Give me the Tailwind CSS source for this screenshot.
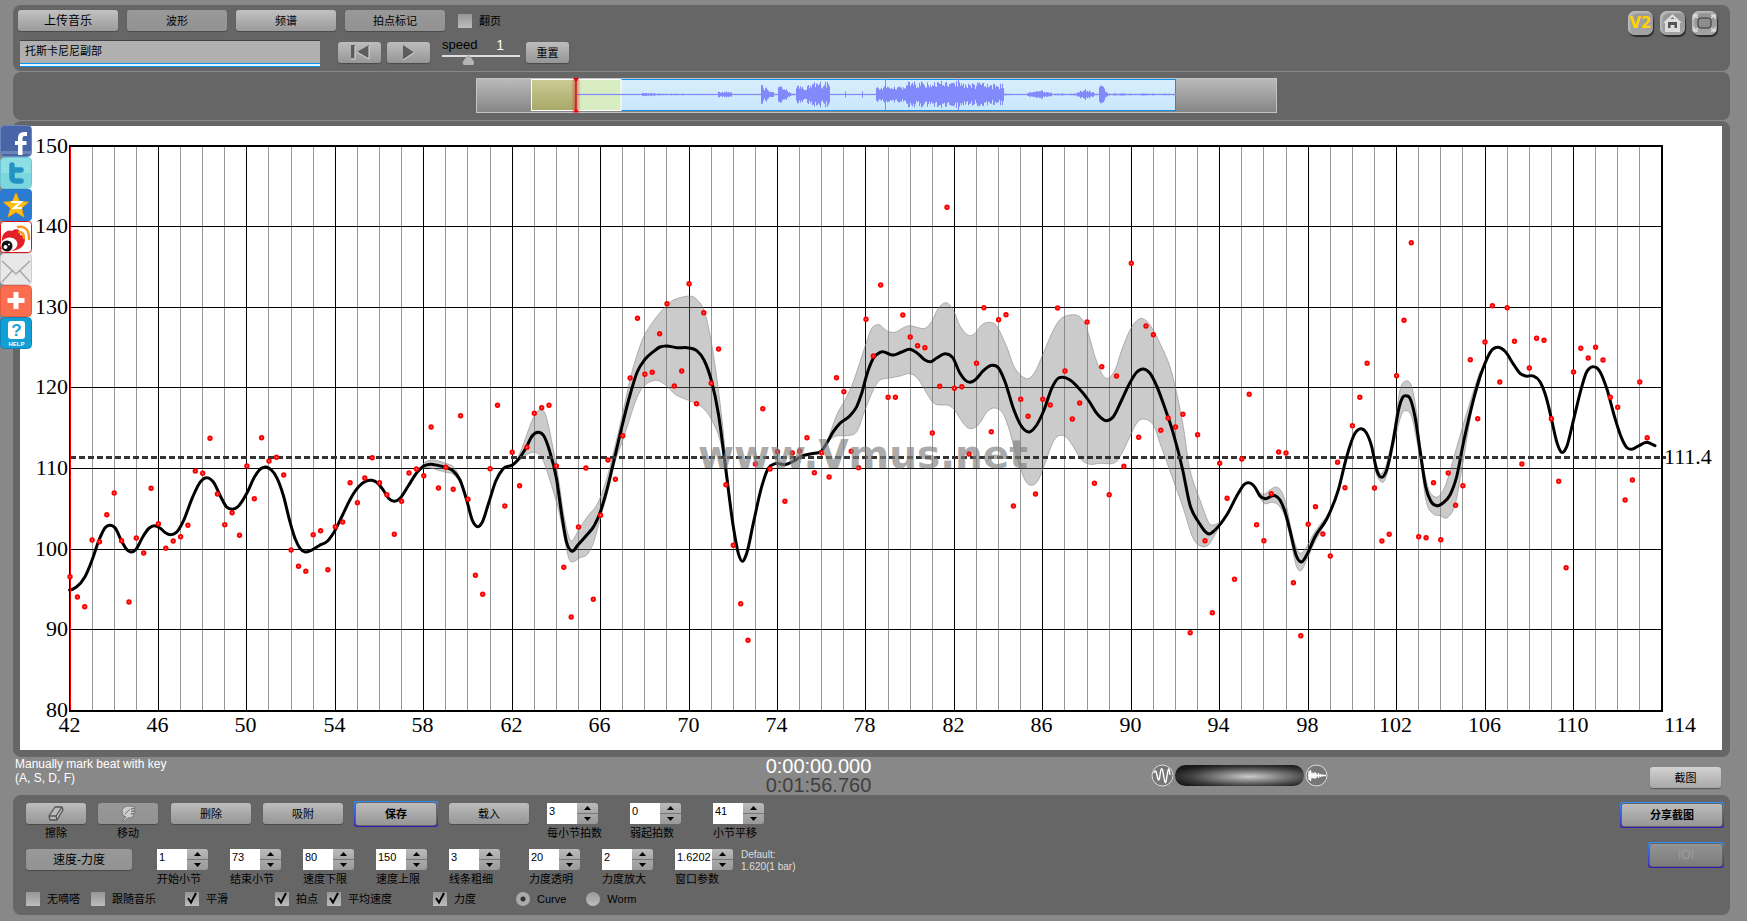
<!DOCTYPE html>
<html lang="zh-CN">
<head>
<meta charset="utf-8">
<meta name="viewport" content="width=device-width, initial-scale=1">
<title>Vmus.net</title>
<script src="https://cdn.jsdelivr.net/npm/@tailwindcss/browser@4"></script>
</head>
<body class="min-h-screen bg-[#888888] font-['Liberation_Sans','Noto_Sans_CJK_SC',sans-serif] text-[11px] leading-[14px] text-black">
<main class="flex flex-col gap-px pt-[5px] pr-[17px] pl-[13px]">

  <header class="flex h-[66px] justify-between rounded-lg bg-[#666666] pt-[5px] pr-[13px] pl-[5px]">
    <div class="flex flex-col">
      <div class="flex items-center gap-[9px]">
        <button class="h-[21px] w-[100px] rounded-[3px] bg-linear-to-b from-[#c2c2c2] to-[#9b9b9b] text-xs shadow-[0_1px_1px_#4a4a4a]">上传音乐</button>
        <button class="h-[21px] w-[100px] rounded-[3px] bg-linear-to-b from-[#999999] to-[#929292] text-[11px] shadow-[0_1px_1px_#4a4a4a]">波形</button>
        <button class="h-[21px] w-[100px] rounded-[3px] bg-linear-to-b from-[#c2c2c2] to-[#9b9b9b] text-[11px] shadow-[0_1px_1px_#4a4a4a]">频谱</button>
        <button class="h-[21px] w-[100px] rounded-[3px] bg-linear-to-b from-[#999999] to-[#929292] text-[11px] shadow-[0_1px_1px_#4a4a4a]">拍点标记</button>
        <label class="ml-1 flex items-center gap-[7px]"><input type="checkbox" class="size-[14px] appearance-none bg-linear-to-b from-[#969696] to-[#bdbdbd]">翻页</label>
      </div>
      <div class="flex pt-[9px] pl-[2px]">
        <input type="text" aria-label="曲名" value="托斯卡尼尼副部" class="h-[27px] w-[300px] border-t border-[#444444] bg-[#b0b0b0] px-[5px] pb-2 text-[11px] shadow-[inset_0_-1px_#0a92f0,inset_0_-3px_#e6f3ff,inset_0_-4px_#0a92f0] outline-none">
        <button aria-label="回到开头" class="mt-[2px] ml-[18px] grid h-[21px] w-[43px] place-items-center rounded-[3px] bg-linear-to-b from-[#bdbdbd] to-[#969696] shadow-[0_1px_1px_#4a4a4a]">
          <svg width="22" height="17" viewBox="0 0 22 17"><path d="M2 1h4v14H2zM20 1v14L8 8z" fill="#5c5c5c"/><path d="M6 2v13H2M20 2v13L8 8" fill="none" stroke="#ddd" stroke-width="1"/></svg>
        </button>
        <button aria-label="播放" class="mt-[2px] ml-[6px] grid h-[21px] w-[43px] place-items-center rounded-[3px] bg-linear-to-b from-[#bdbdbd] to-[#969696] shadow-[0_1px_1px_#4a4a4a]">
          <svg width="16" height="17" viewBox="0 0 16 17"><path d="M2 1v15l11-7.500z" fill="#5c5c5c"/><path d="M2 16l11-7.500" stroke="#ddd"/></svg>
        </button>
        <div class="-mt-[2px] ml-3 flex w-[78px] flex-col gap-[2px]">
          <div class="flex items-end justify-between pr-4 text-[13px] leading-[14px]"><label for="speed">speed</label><output for="speed" class="text-sm leading-[14px] text-white">1</output></div>
          <input id="speed" type="range" min="0" max="100" value="31" class="h-[11px] w-full appearance-none bg-[linear-gradient(#ddd,#ddd)] bg-[length:100%_2px] bg-[position:0_1px] bg-no-repeat [&::-webkit-slider-thumb]:h-[11px] [&::-webkit-slider-thumb]:w-3 [&::-webkit-slider-thumb]:appearance-none [&::-webkit-slider-thumb]:bg-[#b4b4b4] [&::-webkit-slider-thumb]:[clip-path:polygon(50%_0,100%_75%,90%_100%,10%_100%,0_75%)]">
        </div>
        <button class="mt-[2px] ml-[6px] h-[21px] w-[43px] rounded-[3px] bg-linear-to-b from-[#bdbdbd] to-[#969696] text-[11px] shadow-[0_1px_1px_#4a4a4a]">重置</button>
      </div>
    </div>
    <nav class="flex gap-[7px] pt-px">
      <a href="#v2" class="grid h-6 w-[25px] place-items-center rounded-[7px] bg-linear-to-b from-[#999999] to-[#a4a4a4] font-['DejaVu_Sans',sans-serif] text-[15px] leading-[15px] font-bold text-[#ffd200] shadow-[1px_2px_1px_#2c2c2c,inset_2px_2px_2px_#bdbdbd]">V2</a>
      <a href="#home" aria-label="主页" class="grid h-6 w-[25px] place-items-center rounded-[7px] bg-linear-to-b from-[#919191] to-[#a4a4a4] shadow-[1px_2px_1px_#2c2c2c,inset_2px_2px_2px_#bdbdbd]">
        <svg width="21" height="20" viewBox="0 0 21 20"><path d="M10.500 1L20 10h-2v9H3v-9H1z" fill="#ddd"/><path d="M6 9h9v6h-2.500v-3H8.500v3H6z" fill="#555"/><path d="M8.500 6l2-2 2 2z" fill="#777"/></svg>
      </a>
      <a href="#fullscreen" aria-label="全屏" class="grid h-6 w-[25px] place-items-center rounded-[7px] bg-linear-to-b from-[#919191] to-[#a4a4a4] shadow-[1px_2px_1px_#2c2c2c,inset_2px_2px_2px_#bdbdbd]">
        <svg width="23" height="20" viewBox="0 0 23 20" fill="none"><rect x="5" y="5" width="13" height="10" rx="2.500" fill="#8c8c8c" stroke="#333"/><path d="M1 6V2h4M1 2l4 3M18 2h4v4M22 2l-4 3M1 14v4h4M1 18l4-3M18 18h4v-4M22 18l-4-3" stroke="#ddd" stroke-width="1.500"/></svg>
      </a>
    </nav>
  </header>

  <section aria-label="时间轴" class="flex h-[48px] items-start justify-center rounded-lg bg-[#666666] pt-[6px] pl-[10px]">
    <svg width="801" height="35" viewBox="476 78 801 35">
      <defs>
        <linearGradient id="rail" x2="0" y2="1"><stop stop-color="#bbb"/><stop offset="1" stop-color="#858585"/></linearGradient>
        <linearGradient id="olive" x2="0" y2="1"><stop stop-color="#cbcb95"/><stop offset="1" stop-color="#a8a868"/></linearGradient>
        <linearGradient id="glow"><stop stop-color="#e33" stop-opacity="0"/><stop offset=".5" stop-color="#d22" stop-opacity=".6"/><stop offset="1" stop-color="#e33" stop-opacity="0"/></linearGradient>
        <linearGradient id="sky" x2="0" y2="1"><stop stop-color="#d8eefd"/><stop offset="1" stop-color="#c9e7fd"/></linearGradient>
      </defs>
      <rect x="476.500" y="78.500" width="800" height="34" fill="url(#rail)" stroke="#c4c4c4"/>
      <rect x="576" y="79.500" width="599.500" height="31" fill="url(#sky)" stroke="#0d90ee"/>
      <rect x="532" y="79.500" width="44" height="31" fill="url(#olive)"/>
      <rect x="576" y="79.500" width="45" height="31" fill="#d8eec2"/>
      <rect x="531.500" y="79.500" width="89.500" height="31" fill="none" stroke="#fff"/>
      <path id="wave" fill="none" stroke="#8189fb" stroke-width="1"/>
      <rect x="571" y="80" width="10" height="31" fill="url(#glow)"/>
      <path d="M576 79v33" stroke="#a00"/>
      <path d="M573 78h6l-2 3h-2zM573 112.500h6l-2-3h-2z" fill="#e00"/>
    </svg>
  </section>

  <section aria-label="速度曲线" class="rounded-lg bg-[#666666] pt-[5px] pr-2 pb-[7px] pl-[7px]">
    <svg class="block w-full bg-white" viewBox="20 126 1702 624" role="img" aria-label="速度曲线图">
      <g id="minor" stroke="#969696" shape-rendering="crispEdges"></g>
      <g id="major" stroke="#000" shape-rendering="crispEdges"></g>
      <g id="labels" font-family="Liberation Serif, serif" font-size="22"></g>
      <g id="band" fill="#777" fill-opacity=".38" stroke="#888" stroke-opacity=".6"></g>
      <path id="curve" fill="none" stroke="#000" stroke-width="3" stroke-linecap="round"/>
      <path d="M70 457.500H1666" stroke="#333" stroke-width="3" stroke-dasharray="6 3"/>
      <rect x="70" y="146" width="1592" height="565" fill="none" stroke="#000" stroke-width="2"/>
      <path d="M70.500 147V710" stroke="#f00" shape-rendering="crispEdges"/>
      <g id="dots" fill="#f99" stroke="#f00" stroke-width="2"></g>
      <text x="698" y="468" font-family="DejaVu Sans, sans-serif" font-weight="bold" font-size="39" fill="#808080" fill-opacity=".68">www.Vmus.net</text>
      <text x="1664" y="464" font-family="Liberation Serif, serif" font-size="22">111.4</text>
    </svg>
  </section>

  <section class="-mt-px grid h-[38px] grid-cols-[44%_auto_1fr] pr-[9px] pl-[2px]">
    <p class="text-xs leading-[14px] text-white">Manually mark beat with key<br>(A, S, D, F)</p>
    <div class="text-xl leading-[19px] text-white">0:00:00.000<br><span class="text-[#404040]">0:01:56.760</span></div>
    <div class="flex items-start justify-between">
      <div class="mt-[7px] ml-[280px] flex items-center gap-px">
        <svg width="23" height="23" viewBox="0 0 23 23" fill="none"><circle cx="11.500" cy="11.500" r="10.500" fill="#777" stroke="#ddd"/><path d="M3 9c1-3 2-3 3 2s2 8 3 0 2-9 3.500 0 2 11 3.500 1 2-9 3-1" stroke="#fff" stroke-width="1.400"/></svg>
        <div class="h-[21px] w-[129px] rounded-full bg-[radial-gradient(ellipse_at_58%_55%,#cccccc_0%,#808080_30%,#3c3c3c_58%,#181818_80%)]"></div>
        <svg width="23" height="23" viewBox="0 0 23 23" fill="none"><circle cx="11.500" cy="11.500" r="10.500" fill="#777" stroke="#ddd"/><path d="M3 11.500h18M4 7v9M5.500 6v11M7 8.500v6M8.500 9v5M10 8v7M11.500 9.500v4M13.500 9v5M15.500 10v3M17.500 10.500v2" stroke="#fff" stroke-width="1.400"/></svg>
      </div>
      <button class="mt-[10px] h-[21px] w-[71px] rounded-[3px] bg-linear-to-b from-[#d2d2d2] to-[#a8a8a8] text-[11px] shadow-[0_1px_1px_#555555]">截图</button>
    </div>
  </section>

  <section class="-mt-px flex justify-between rounded-lg bg-[#666666] pt-[6px] pr-[6px] pb-[9px] pl-[13px]">
    <div class="flex flex-col">
      <div class="flex h-[39px] pt-[2px]">
        <div class="flex w-[60px] flex-col items-center gap-[2px]">
          <button aria-label="擦除" class="grid h-[21px] w-full place-items-center rounded-[3px] bg-linear-to-b from-[#bdbdbd] to-[#969696] shadow-[0_1px_1px_#4a4a4a]">
            <svg width="18" height="16" viewBox="0 0 18 16" fill="#bbb" stroke="#555" stroke-width="1.300" stroke-linejoin="round"><path d="M2 10L8 1h7l1 3-6 10H3z"/><path d="M2 10h7l6-9M9 10l1 4" fill="none"/></svg>
          </button><span>擦除</span>
        </div>
        <div class="ml-3 flex w-[60px] flex-col items-center gap-[2px]">
          <button aria-label="移动" class="grid h-[21px] w-full place-items-center rounded-[3px] bg-linear-to-b from-[#989898] to-[#929292] shadow-[0_1px_1px_#4a4a4a]">
            <svg width="19" height="17" viewBox="0 0 19 17" fill="#ccc" stroke="#777"><path d="M3 16l4-4c-3-1-4-3-4-6 0-3 3-5 7-5 3 0 6 1 6 2l-4 1 4-.500v2l-4 1 4-.500v2l-4 1 3 0c0 3-3 4-6 4l-4 3z"/><path d="M6 9l5-5" fill="none"/></svg>
          </button><span>移动</span>
        </div>
        <button class="ml-[13px] h-[21px] w-20 rounded-[3px] bg-linear-to-b from-[#bdbdbd] to-[#969696] text-[11px] shadow-[0_1px_1px_#4a4a4a]">删除</button>
        <button class="ml-3 h-[21px] w-20 rounded-[3px] bg-linear-to-b from-[#bdbdbd] to-[#969696] text-[11px] shadow-[0_1px_1px_#4a4a4a]">吸附</button>
        <button class="-mt-[2px] ml-[11px] h-[26px] w-[84px] rounded-[3px] bg-linear-to-b from-[#2f8ff5] to-[#3a12b8] p-px text-[11px] font-bold"><span class="grid h-full place-items-center rounded-[3px] border border-[#666666] bg-linear-to-b from-[#bdbdbd] to-[#969696]">保存</span></button>
        <button class="ml-[11px] h-[21px] w-20 rounded-[3px] bg-linear-to-b from-[#bdbdbd] to-[#969696] text-[11px] shadow-[0_1px_1px_#4a4a4a]">载入</button>
        <div class="ml-[18px] flex gap-8" data-steppers="3:每小节拍数,0:弱起拍数,41:小节平移"></div>
      </div>
      <div class="mt-[9px] flex h-[37px]">
        <button class="h-[21px] w-[106px] rounded-[3px] bg-linear-to-b from-[#999999] to-[#929292] text-xs shadow-[0_1px_1px_#4a4a4a]">速度-力度</button>
        <div class="ml-[25px] flex gap-[22px]" data-steppers="1:开始小节,73:结束小节,80:速度下限,150:速度上限,3:线条粗细"></div>
        <div class="ml-[29px] flex gap-[22px]" data-steppers="20:力度透明,2:力度放大,1.6202:窗口参数"></div>
        <p class="ml-2 text-[10px] leading-3 text-[#dddddd]">Default:<br>1.620(1 bar)</p>
      </div>
      <div class="mt-[6px] flex items-center">
        <div class="flex gap-[11px]" data-checks="0:无嘀嗒,0:跟随音乐"></div>
        <div class="ml-[29px] flex" data-checks="1:平滑"></div>
        <div class="ml-[47px] flex gap-[9px]" data-checks="1:拍点,1:平均速度"></div>
        <div class="ml-[41px] flex" data-checks="1:力度"></div>
        <label class="ml-10 flex items-center gap-[7px]"><input type="radio" name="view" checked class="size-[14px] appearance-none rounded-full bg-linear-to-b from-[#999999] to-[#bdbdbd] checked:bg-[radial-gradient(circle,#333333_2px,#aaaaaa_3px)]">Curve</label>
        <label class="ml-5 flex items-center gap-[7px]"><input type="radio" name="view" class="size-[14px] appearance-none rounded-full bg-linear-to-b from-[#999999] to-[#bdbdbd] checked:bg-[radial-gradient(circle,#333333_2px,#aaaaaa_3px)]">Worm</label>
      </div>
    </div>
    <div class="flex flex-col items-end gap-[14px] pt-px">
      <button class="h-[26px] w-[104px] rounded-[3px] bg-linear-to-b from-[#2f8ff5] to-[#3a12b8] p-px text-[11px] font-bold"><span class="grid h-full place-items-center rounded-[3px] border border-[#666666] bg-linear-to-b from-[#bdbdbd] to-[#969696]">分享截图</span></button>
      <button disabled class="h-[26px] w-[76px] rounded-[3px] bg-linear-to-b from-[#2f8ff5] to-[#3a12b8] p-px text-xs text-[#9c9c9c]"><span class="grid h-full place-items-center rounded-[3px] border border-[#666666] bg-linear-to-b from-[#949494] to-[#7c7c7c]">IOI</span></button>
    </div>
  </section>
</main>

<nav aria-label="分享" class="absolute top-[125px] left-0 flex flex-col">
  <a href="#facebook" aria-label="Facebook"><svg class="block" width="32" height="32" viewBox="0 0 32 32"><rect x=".5" y=".5" width="31" height="31" rx="4" fill="#4865a8" stroke="#6c86bf"/><path d="M1 26h30v3H1z" fill="#6d84b8"/><path d="M18 30V13q0-6 6-6h3v4h-2.500q-2 0-2 2v17zM15 16h11.500v4H15z" fill="#fff"/></svg></a>
  <a href="#twitter" aria-label="Twitter"><svg class="block" width="32" height="32" viewBox="0 0 32 32"><rect x=".5" y=".5" width="31" height="31" rx="4" fill="#8ddfe4" stroke="#6fc4d4"/><path d="M1 16h30v15H1z" fill="#7bd6de"/><path d="M12 8v12q0 4 4 4h5M12 13h9" fill="none" stroke="#2592c4" stroke-width="5.500" stroke-linecap="round" stroke-linejoin="round"/></svg></a>
  <a href="#qzone" aria-label="QQ空间"><svg class="block" width="32" height="32" viewBox="0 0 32 32"><rect width="32" height="32" rx="4" fill="#2b7bd2"/><path d="M16 4l3.500 8.500 9 .7-7 5.800 2.300 9L16 23l-7.800 5 2.300-9-7-5.800 9-.7z" fill="#fdbf18" stroke="#f7a400"/><path d="M11 13h10l-7 6h8" fill="none" stroke="#fff" stroke-width="2"/></svg></a>
  <a href="#weibo" aria-label="微博"><svg class="block" width="32" height="32" viewBox="0 0 32 32"><rect x=".5" y=".5" width="31" height="31" rx="3" fill="#fff" stroke="#d11"/><path d="M2 17C3 11 9 8 12 10c3-3 8-2 8 1v3c5 0 6 4 4 9-2 5-11 8-18 7L1 28z" fill="#e32028"/><ellipse cx="9" cy="23.500" rx="8.500" ry="7" fill="#fff" transform="rotate(-12 9 23.500)"/><circle cx="7" cy="25" r="5.500" fill="#111"/><circle cx="5.500" cy="26" r="2" fill="#fff"/><circle cx="9" cy="23.500" r="1" fill="#fff"/><path d="M18 6q11-2 11 12M19 11q5 0 5 6" fill="none" stroke="#f8991d" stroke-width="2.500" stroke-linecap="round"/></svg></a>
  <a href="#mail" aria-label="邮件"><svg class="block" width="32" height="32" viewBox="0 0 32 32"><rect x=".5" y=".5" width="31" height="31" rx="4" fill="#e8e8e8" stroke="#ccc"/><path d="M2 8l14 13L30 8M2 29l10-11M30 29L20 18" fill="none" stroke="#a8a8a8" stroke-width="1.500"/></svg></a>
  <a href="#more" aria-label="更多"><svg class="block" width="32" height="32" viewBox="0 0 32 32"><rect x=".5" y=".5" width="31" height="31" rx="4" fill="#fa6d4e" stroke="#e85a3c"/><path d="M16 7v17M7.500 15.500h17" stroke="#fff" stroke-width="5"/></svg></a>
  <a href="#help" aria-label="帮助"><svg class="block" width="32" height="32" viewBox="0 0 32 32"><rect x=".5" y=".5" width="31" height="31" rx="4" fill="#119fd6" stroke="#0b86bb"/><rect x="8" y="4" width="17" height="18" rx="3" fill="#fff"/><text x="16.500" y="19" text-anchor="middle" font-family="Liberation Sans, sans-serif" font-weight="bold" font-size="17" fill="#18a4d4">?</text><text x="16.500" y="29" text-anchor="middle" font-family="Liberation Sans, sans-serif" font-weight="bold" font-size="6" fill="#fff">HELP</text></svg></a>
</nav>

<script>
const $ = id => document.getElementById(id);

// Numeric steppers
let uid = 0;
document.querySelectorAll('[data-steppers]').forEach(box => {
  box.innerHTML = box.dataset.steppers.split(',').map(item => {
    const [value, name] = item.split(':'), id = 'n' + (++uid);
    const wide = value.length > 4;
    const cell = wide ? 'flex w-[58px] flex-col gap-[2px]' : 'flex w-[51px] flex-col gap-[2px]';
    return `<div class="${cell}">
      <div class="flex">
        <input id="${id}" type="text" inputmode="decimal" value="${value}" class="h-[21px] min-w-0 flex-1 bg-white pb-[5px] pl-[2px] text-[11px] outline-none">
        <div class="flex h-[21px] w-[21px] shrink-0 flex-col gap-px overflow-hidden rounded-r-[3px] bg-[#777777]">
          <button aria-label="增加" class="grid flex-1 place-items-center bg-linear-to-b from-[#bbbbbb] to-[#a8a8a8]"><svg width="7" height="4" viewBox="0 0 7 4"><path d="M0 4L3.500 0 7 4z"/></svg></button>
          <button aria-label="减少" class="grid flex-1 place-items-center bg-linear-to-b from-[#a8a8a8] to-[#999999]"><svg width="7" height="4" viewBox="0 0 7 4"><path d="M0 0h7L3.500 4z"/></svg></button>
        </div>
      </div>
      <label for="${id}" class="whitespace-nowrap">${name}</label></div>`;
  }).join('');
});

// Check boxes
document.querySelectorAll('[data-checks]').forEach(box => {
  box.innerHTML = box.dataset.checks.split(',').map(item => {
    const [on, name] = item.split(':');
    return `<label class="flex items-center gap-[7px]"><span class="relative grid"><input type="checkbox" ${on === '1' ? 'checked' : ''} class="peer size-[14px] appearance-none bg-linear-to-b from-[#969696] to-[#bdbdbd]"><svg class="absolute inset-0 hidden peer-checked:block" width="14" height="14" viewBox="0 0 14 14"><path d="M3 6l3 4.500L11 1" fill="none" stroke="#000" stroke-width="2"/></svg></span>${name}</label>`;
  }).join('');
});

// Waveform: [from, to, start amplitude, end amplitude]
const env = [[577,641,.6,.6],[642,654,2,1.5],[655,717,1,.7],[718,731,3,3],[732,760,.6,.6],[761,773,10,3],[774,777,1,1],[778,790,10,3],[791,795,1,1],[796,806,10,6],[807,829,13,13],[830,875,.6,.6],[876,905,9,8],[906,960,13,14],[961,1003,13,11],[1004,1026,1,.6],[1027,1038,2,5],[1039,1051,5,2],[1052,1074,1,1],[1075,1084,2,6],[1085,1094,6,2],[1095,1098,1,1],[1099,1107,13,3],[1108,1175,1.2,1]];
let w = '';
env.forEach(([a, b, p, q]) => {
  for (let x = a; x <= b; x++) {
    const n = Math.abs(Math.sin(x * 12.9898) * 43758.5453) % 1;
    let h = (p + (q - p) * (x - a) / (b - a)) * (.45 + .55 * n);
    if (x === 885 || x === 958) h = 16;
    if (x === 845 || x === 862) h = 3;
    h = Math.max(h, .6);
    w += `M${x + .5} ${94.5 - h}v${2 * h}`;
  }
});
$('wave').setAttribute('d', w);

// Grid and axis labels
const X = v => Math.floor(70 + (v - 42) * 22.11) + .5, Y = v => Math.floor(146 + (150 - v) * 8.06) + .5;
let minor = '', major = '', labels = '';
for (let v = 43; v < 114; v++) {
  const line = `<path d="M${X(v)} 146V710"/>`;
  if ((v - 42) % 4) minor += line; else major += line;
}
for (let v = 80; v <= 150; v += 10) {
  if (v > 80 && v < 150) major += `<path d="M70 ${Y(v)}H1662"/>`;
  labels += `<text x="68" y="${Y(v) + 6}" text-anchor="end">${v}</text>`;
}
for (let v = 42; v <= 114; v += 4) labels += `<text x="${v === 114 ? 1680 : X(v) - 1}" y="732" text-anchor="middle">${v}</text>`;
$('minor').innerHTML = minor; $('major').innerHTML = major; $('labels').innerHTML = labels;

// Plot tiles: origin x, origin y, units per pixel on x (y always uses 3)
const tile = {a: [60, 380, 2.8], b: [560, 260, 3], c: [840, 180, 3], d: [1160, 240, 3], e: [1380, 220, 3]};
const read = s => {
  const out = []; let t;
  s.trim().split(/\s+/).forEach(p => {
    if (tile[p]) { t = tile[p]; return; }
    const [x, y] = p.split(',').map(Number);
    out.push([t[0] + x / t[2], t[1] + y / 3]);
  });
  return out;
};
// Closed outlines
const spline = p => {
  let d = `M${p[0][0].toFixed(1)} ${p[0][1].toFixed(1)}`;
  for (let i = 0; i < p.length - 1; i++) {
    const a = p[i - 1] || p[i], b = p[i], c = p[i + 1], e = p[i + 2] || c;
    d += `C${[b[0] + (c[0] - a[0]) / 6, b[1] + (c[1] - a[1]) / 6, c[0] - (e[0] - b[0]) / 6, c[1] - (e[1] - b[1]) / 6, c[0], c[1]].map(n => n.toFixed(1)).join(' ')}`;
  }
  return d;
};
// Single-valued curve: slopes from the parabola through three neighbours
const smooth = p => {
  const sec = i => (p[i + 1][1] - p[i][1]) / (p[i + 1][0] - p[i][0]);
  const m = p.map((q, i) => {
    if (i === 0) return 0;
    if (i === p.length - 1) return sec(i - 1);
    const h0 = q[0] - p[i - 1][0], h1 = p[i + 1][0] - q[0];
    return (sec(i - 1) * h1 + sec(i) * h0) / (h0 + h1);
  });
  let d = `M${p[0][0].toFixed(1)} ${p[0][1].toFixed(1)}`;
  for (let i = 0; i < p.length - 1; i++) {
    const b = p[i], c = p[i + 1], h = (c[0] - b[0]) / 3;
    d += `C${[b[0] + h, b[1] + m[i] * h, c[0] - h, c[1] - m[i + 1] * h, c[0], c[1]].map(n => n.toFixed(1)).join(' ')}`;
  }
  return d;
};

$('curve').setAttribute('d', smooth(read(`
a 27,630 45,622 70,590 90,540 110,478 125,445 139,436 155,445 172,482 185,506 198,516 213,508 232,470 250,444 264,437 280,444 295,458 310,464 325,458 345,424 370,355 392,307 412,293 430,307 450,350 466,380 483,388 500,378 523,340 545,290 562,266 577,262 592,270 608,295 625,345 645,430 660,480 672,505 687,516 703,511 725,497 750,482 768,455 790,408 815,353 838,318 855,304 873,301 888,308 905,330 920,355 936,364 952,355 975,318 1000,277 1018,259 1037,253 1057,256 1080,262 1100,272 1120,300 1140,365 1155,422 1170,440 1183,425 1200,370 1220,304 1240,267 1268,254 1285,236 1305,203 1322,168 1340,157 1355,168 1370,210 1390,295 1405,405 1418,485 1434,514 1450,495 1475,465 1497,435 1513,395 1530,335
b 160,610 187,495 210,405 232,335 255,298 280,275 300,261 318,258 350,263 388,264 410,272 432,300 455,365 475,460 495,610 520,800 535,880 548,904 560,880 580,790 605,680 625,625 645,611 675,614 700,604 725,588 755,581 785,572 800,550 820,515 840,490 870,467 890,440 905,400 920,345 940,295 962,276 1000,285 1025,276 1050,268 1075,282 1095,300 1112,305 1130,294 1157,281 1178,293 1200,340 1215,360 1230,367
c 405,600 430,572 455,556 475,563 495,605 520,685 545,740 570,755 590,735 612,690 635,625 652,597 668,592 690,600 715,623 745,660 770,700 800,722 820,710 845,660 870,608 890,577 910,567 930,580 950,618 975,685 1000,760 1028,870 1050,975 1075,1025 1108,1062 1125,1050 1160,1005 1195,940 1213,913 1227,908
d 285,742 300,768 315,776 345,767 360,780 375,815 392,880 408,945 423,966 440,945 465,890 500,837 535,750 560,650 585,580 602,566 618,577 635,620 650,690 665,712 680,690 700,600 718,500 728,472 738,467 750,475 765,530 780,630 797,740 812,783 830,797 850,788 870,765 890,710 910,610 935,500
e 300,470 315,430 332,395 355,382 375,394 400,432 420,460 437,468 460,468 480,485 498,530 514,595 530,665 545,697 560,680 578,610 600,520 618,460 642,440 660,455 680,505 705,595 725,655 742,684 755,688 775,678 800,667 825,677`)));

const bands = [
`a 560,266 577,256 590,266 578,266 560,268`,
`a 1000,274 1020,248 1040,240 1060,243 1080,250 1100,259 1115,282 1130,325 1120,305 1100,282 1080,277 1040,265 1020,264 1000,280`,
`a 1278,243 1295,200 1315,140 1332,100 1345,90 1360,105 1378,190 1395,290 1410,400 1425,472 1436,480 1455,445 1480,405 1500,380 1517,340
b 150,620 187,465 212,350 240,258 258,217 290,170 322,135 345,118 388,108 410,118 432,150 450,225 467,330 485,470 500,620 520,800 503,660 480,540 455,480 432,447 409,431 370,415 345,403 320,378 290,361 255,375 230,415 205,490 187,545 165,605 145,690 121,775 100,850 80,885 60,893 38,906 25,890 8,810
a 1395,385 1370,295 1350,235 1328,217 1305,225 1290,238`,
`b 785,575 805,535 830,465 855,420 880,365 905,290 920,245 935,205 957,194 980,212 1005,217 1030,203 1050,197 1075,203 1095,205 1115,185 1135,145 1158,128 1180,150 1200,198 1225,226
c 405,460 425,435 447,427 470,438 500,500 525,565 560,596 585,575 612,515 640,450 665,414 700,404 722,413 740,445 765,530 785,580 803,595 825,570 845,510 870,450 890,422 908,416 930,435 960,490 990,560 1010,640 1030,740 1050,870 1080,960 1105,1025 1120,1035 1140,1028
d 178,860 160,893 145,915 130,920 112,912 95,885 70,805 45,735 20,665 0,610
c 940,735 912,717 890,730 865,780 840,830 820,850 780,850 750,853 725,840 700,800 680,773 660,766 640,785 615,850 595,900 575,916 555,900 530,830 505,740 485,695 462,684 440,697 415,735 390,746 370,730 345,692 325,676 285,672 260,640 235,598 210,581 180,588 150,594 120,600 100,630 75,690 50,755 20,767
b 835,527 815,535 795,560 785,577`,
`d 295,758 313,762 330,750 348,741 365,755 380,800 395,875 410,925 423,940 440,920 465,875 500,830 500,842 465,905 440,960 423,992 408,975 392,900 375,830 355,795 335,787 315,791 297,770`,
`d 640,640 655,690 665,700 680,670 700,580 720,450 738,423 755,440 770,520 785,650 805,745 827,771 845,758 862,720 885,640 905,570 935,470 960,395 960,425 940,490 925,570 905,690 885,795 862,833 840,827 820,822 800,790 785,690 770,600 755,530 738,512 722,530 700,620 680,705 667,727 650,705 640,650`];
$('band').innerHTML = bands.map(b => `<path d="${spline(read(b))}Z"/>`).join('');

// Beat tempo dots, three per bar: vertical position in thirds of a pixel from each group's origin
const beats = [
[380, [590,651,680,480,485,404,339,482,666,474,519,325,431,505,483,470,436,273,280,175,342,434,398,466,258,356,173,243,232,285,510,559,574,464,452,569,440,426,308,368,294,233,308,344,463,364,279,267,287,141,324,262,328,107,358,586,643,266,76,378,217,317,202,100,83,76,258,562,711,441,264,658,406]],
[260, [600,658,527,354,175,343,337,221,131,378,333,71,431,158,370,267,674,856,1031,1141,612,446,627,575,724,579,573,533,638,578,651,353,395,574,623,178,288,75,412,412,165,231,257,263,519,379]],
[180, [82,625,620,822,550,383,755,419,404,978,658,709,942,658,675,384,573,717,669,426,910,560,944,588,859,250,772,438,464,751,714,741,703]],
[240, [1178,584,902,1118,670,775,1018,657,463,854,902,761,636,639,1028,1187,853,800,882,948,667,743,557,472,370,744,903,883,407,241,8,890,893,728,899,699,796,737]],
[220, [419,596,366,257,486,263,364,732,444,355,361,596,784,1043,456,385,414,382,420,532,562,840,780,486,653]]];
let k = 0;
$('dots').innerHTML = beats.flatMap(([top, ys]) => ys.map(y => `<circle cx="${(70 + k++ * 7.37).toFixed(1)}" cy="${(top + y / 3).toFixed(1)}" r="1.700"/>`)).join('');
</script>
</body>
</html>
